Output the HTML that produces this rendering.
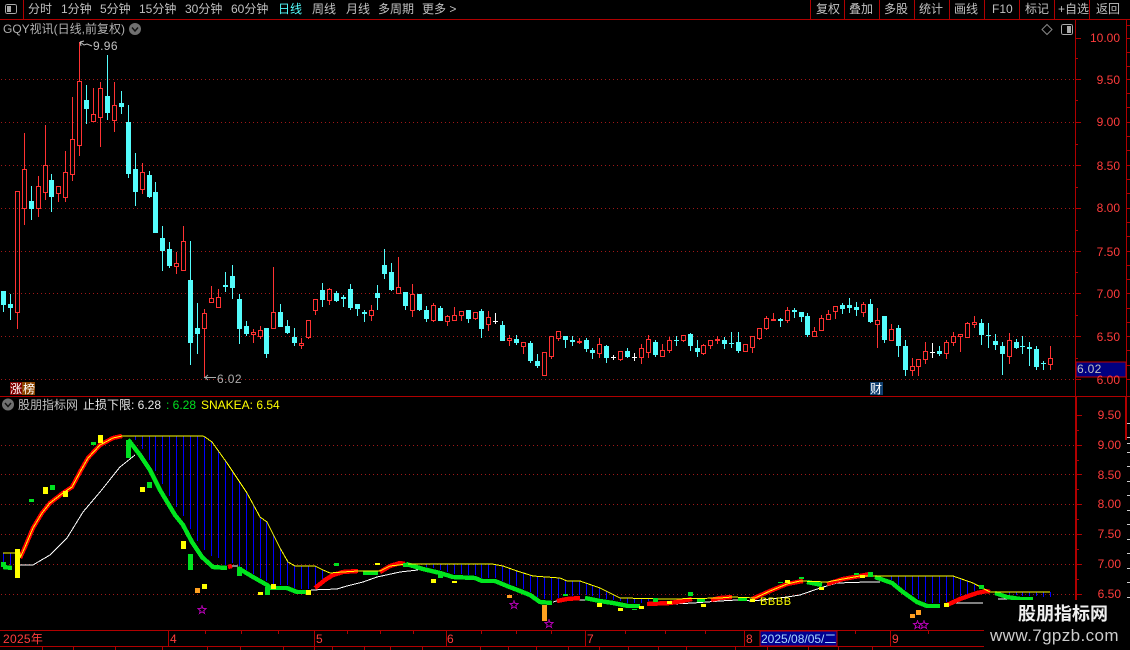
<!DOCTYPE html>
<html><head><meta charset="utf-8"><style>
html,body{margin:0;padding:0;background:#000;width:1130px;height:650px;overflow:hidden}
#r{position:relative;width:1130px;height:650px;background:#000;overflow:hidden;font:12px/14px "Liberation Sans","WenQuanYi Zen Hei","Noto Sans CJK SC",sans-serif;color:#c0c0c0}
#r span{position:absolute;white-space:nowrap}
svg{position:absolute;left:0;top:0}
.p{color:#ff3c3c;width:40px;text-align:right}
.a{color:#ff3c3c}
</style></head><body><div id="r">
<svg id="s" width="1130" height="650" shape-rendering="crispEdges">
<g fill="#b00000">
<rect x="0" y="19" width="1130" height="1"/><rect x="23" y="0" width="1" height="19"/>
<rect x="810" y="0" width="1" height="19"/><rect x="844" y="0" width="1" height="19"/><rect x="879" y="0" width="1" height="19"/><rect x="914" y="0" width="1" height="19"/><rect x="949" y="0" width="1" height="19"/><rect x="984" y="0" width="1" height="19"/><rect x="1019" y="0" width="1" height="19"/><rect x="1054" y="0" width="1" height="19"/><rect x="1089" y="0" width="1" height="19"/>
<rect x="1075" y="20" width="1" height="376"/><rect x="1126" y="20" width="1" height="376"/>
<rect x="0" y="396" width="1130" height="1"/>
<rect x="1075" y="396" width="2" height="254"/><rect x="1125" y="396" width="2" height="44"/>
<rect x="0" y="630" width="1075" height="1"/><rect x="0" y="646" width="1075" height="1"/>
<rect x="168" y="631" width="1" height="15"/><rect x="314" y="631" width="1" height="15"/><rect x="446" y="631" width="1" height="15"/><rect x="585" y="631" width="1" height="15"/><rect x="744" y="631" width="1" height="15"/><rect x="890" y="631" width="1" height="15"/>
<rect x="205" y="631" width="1" height="3"/><rect x="241" y="631" width="1" height="3"/><rect x="278" y="631" width="1" height="3"/><rect x="347" y="631" width="1" height="3"/><rect x="380" y="631" width="1" height="3"/><rect x="413" y="631" width="1" height="3"/><rect x="481" y="631" width="1" height="3"/><rect x="516" y="631" width="1" height="3"/><rect x="551" y="631" width="1" height="3"/><rect x="625" y="631" width="1" height="3"/><rect x="665" y="631" width="1" height="3"/><rect x="705" y="631" width="1" height="3"/><rect x="855" y="631" width="1" height="3"/><rect x="928" y="631" width="1" height="3"/>
<rect x="42" y="647" width="1" height="3"/><rect x="73" y="647" width="1" height="3"/><rect x="115" y="647" width="1" height="3"/><rect x="162" y="647" width="1" height="3"/><rect x="207" y="647" width="1" height="3"/><rect x="240" y="647" width="1" height="3"/><rect x="283" y="647" width="1" height="3"/><rect x="314" y="647" width="1" height="3"/><rect x="332" y="647" width="1" height="3"/><rect x="364" y="647" width="1" height="3"/><rect x="390" y="647" width="1" height="3"/><rect x="422" y="647" width="1" height="3"/><rect x="480" y="647" width="1" height="3"/><rect x="508" y="647" width="1" height="3"/><rect x="536" y="647" width="1" height="3"/><rect x="568" y="647" width="1" height="3"/><rect x="599" y="647" width="1" height="3"/><rect x="628" y="647" width="1" height="3"/><rect x="658" y="647" width="1" height="3"/><rect x="686" y="647" width="1" height="3"/><rect x="735" y="647" width="1" height="3"/><rect x="767" y="647" width="1" height="3"/><rect x="808" y="647" width="1" height="3"/><rect x="838" y="647" width="1" height="3"/><rect x="872" y="647" width="1" height="3"/>
</g>
<g stroke="#a01818" stroke-width="1" stroke-dasharray="1 3">
<line x1="1" y1="79.5" x2="1075" y2="79.5"/><line x1="1" y1="122.5" x2="1075" y2="122.5"/><line x1="1" y1="165.5" x2="1075" y2="165.5"/><line x1="1" y1="208.5" x2="1075" y2="208.5"/><line x1="1" y1="251.5" x2="1075" y2="251.5"/><line x1="1" y1="293.5" x2="1075" y2="293.5"/><line x1="1" y1="336.5" x2="1075" y2="336.5"/><line x1="1" y1="379.5" x2="1075" y2="379.5"/>
<line x1="1" y1="445.5" x2="1075" y2="445.5"/><line x1="1" y1="474.5" x2="1075" y2="474.5"/><line x1="1" y1="504.5" x2="1075" y2="504.5"/><line x1="1" y1="534.5" x2="1075" y2="534.5"/><line x1="1" y1="564.5" x2="1075" y2="564.5"/><line x1="1" y1="594.5" x2="1075" y2="594.5"/>
</g>
<g id="g"></g>
<g fill="#fff">
<rect x="204" y="377" width="12" height="1" fill="#aaa"/>
</g>
<g stroke="#c0c0c0" fill="none" shape-rendering="auto">
<path d="M92 46 L87 44 L84 45 L80 42 M80 42 L84 41 M80 42 L81 46" stroke-width="1"/>
<path d="M216 377.5 H205 M205 377.5 L208 375 M205 377.5 L208 380" stroke-width="1" stroke="#aaa"/>
<path d="M1047 24.5 L1052 29.5 L1047 34.5 L1042 29.5 Z" stroke="#888"/>
</g>
<rect x="1061.5" y="24.5" width="11" height="10" rx="2" fill="none" stroke="#aaa"/><rect x="1067" y="26" width="4" height="7" fill="#aaa"/>
<rect x="5.5" y="4.5" width="11" height="9" rx="2" fill="none" stroke="#aaa"/><rect x="7" y="6" width="4" height="6" fill="#aaa"/>
<g shape-rendering="auto">
<circle cx="135" cy="29" r="6" fill="#707070"/><path d="M132 27.5 L135 31 L138 27.5" fill="none" stroke="#111" stroke-width="1.4"/>
<circle cx="8" cy="404.5" r="6" fill="#707070"/><path d="M5 403 L8 406.5 L11 403" fill="none" stroke="#111" stroke-width="1.4"/>
</g>
<rect x="10" y="382" width="12" height="13" fill="#800000"/><rect x="22" y="382" width="13" height="13" fill="#8b4500"/>
<rect x="870" y="382" width="13" height="13" fill="#104070"/>
<rect x="1076" y="362" width="50" height="15" fill="#000080" stroke="#c00000"/>
<g fill="#b00000" id="t"></g>
<rect x="760" y="631" width="77" height="15" fill="#000090" stroke="#c00000"/>
<rect x="984" y="600" width="146" height="50" fill="#000"/>
</svg>
<span style="left:28px;top:2px">分时</span><span style="left:61px;top:2px">1分钟</span><span style="left:100px;top:2px">5分钟</span><span style="left:139px;top:2px">15分钟</span><span style="left:185px;top:2px">30分钟</span><span style="left:231px;top:2px">60分钟</span><span style="left:278px;top:2px;color:#54fcfc">日线</span><span style="left:312px;top:2px">周线</span><span style="left:346px;top:2px">月线</span><span style="left:378px;top:2px">多周期</span><span style="left:422px;top:2px">更多 &gt;</span>
<span style="left:816px;top:2px">复权</span><span style="left:849px;top:2px">叠加</span><span style="left:884px;top:2px">多股</span><span style="left:919px;top:2px">统计</span><span style="left:954px;top:2px">画线</span><span style="left:992px;top:2px">F10</span><span style="left:1025px;top:2px">标记</span><span style="left:1058px;top:2px">+自选</span><span style="left:1096px;top:2px">返回</span>
<span style="left:3px;top:22px;color:#b0b0b0">GQY视讯(日线,前复权)</span>
<span style="left:93px;top:39px;letter-spacing:.4px">9.96</span>
<span style="left:217px;top:372px;letter-spacing:.4px;color:#aaa">6.02</span>
<span class="p" style="left:1080px;top:31px">10.00</span><span class="p" style="left:1080px;top:73px">9.50</span><span class="p" style="left:1080px;top:115px">9.00</span><span class="p" style="left:1080px;top:159px">8.50</span><span class="p" style="left:1080px;top:201px">8.00</span><span class="p" style="left:1080px;top:245px">7.50</span><span class="p" style="left:1080px;top:287px">7.00</span><span class="p" style="left:1080px;top:330px">6.50</span><span class="p" style="left:1080px;top:373px">6.00</span>
<span style="left:1077px;top:362px;color:#c0c0c0;letter-spacing:.3px">6.02</span>
<span style="left:10px;top:382px;color:#fff;width:25px;letter-spacing:1px">涨榜</span>
<span style="left:870px;top:382px;color:#fff">财</span>
<span style="left:18px;top:398px">股朋指标网</span><span style="left:83px;top:398px;color:#e8e8e8">止损下限: 6.28</span><span style="left:166px;top:398px;color:#00e020">: 6.28</span><span style="left:201px;top:398px;color:#ffff00">SNAKEA: 6.54</span>
<span class="p" style="left:1081px;top:408px">9.50</span><span class="p" style="left:1081px;top:438px">9.00</span><span class="p" style="left:1081px;top:468px">8.50</span><span class="p" style="left:1081px;top:497px">8.00</span><span class="p" style="left:1081px;top:527px">7.50</span><span class="p" style="left:1081px;top:557px">7.00</span><span class="p" style="left:1081px;top:587px">6.50</span>
<span style="left:760px;top:595px;color:#ffff00;font-size:11px;letter-spacing:.6px">BBBB</span>
<span class="a" style="left:3px;top:632px;letter-spacing:.3px">2025年</span><span class="a" style="left:170px;top:632px">4</span><span class="a" style="left:316px;top:632px">5</span><span class="a" style="left:447px;top:632px">6</span><span class="a" style="left:587px;top:632px">7</span><span class="a" style="left:746px;top:632px">8</span><span class="a" style="left:892px;top:632px">9</span>
<span style="left:761px;top:632px;color:#a8d8ff">2025/08/05/二</span>
<span style="left:1018px;top:603px;font-size:18px;line-height:22px;font-weight:bold;color:#eee">股朋指标网</span>
<span style="left:990px;top:626px;font-size:17px;line-height:20px;color:#ccc;letter-spacing:.4px">www.7gpzb.com</span>
</div>
<script>
var D="291,291,305,312,c;294,304,308,320,c;191,191,313,329,r;133,169,209,225,r;186,201,209,220,c;176,186,209,217,r;125,165,193,200,r;174,180,197,212,c;186,186,194,202,r;151,172,198,202,r;97,139,175,181,r;42,81,146,156,r;85,100,109,124,c;88,114,122,122,r;82,88,118,147,r;55,96,113,120,c;82,105,121,132,r;91,103,107,114,c;105,122,174,178,c;153,169,192,206,c;163,172,190,194,r;171,175,197,198,c;182,192,233,233,c;226,238,251,271,c;242,249,266,268,c;252,263,267,274,r;226,241,271,271,r;241,280,343,365,c;303,328,334,354,c;309,313,329,378,r;286,298,303,303,r;289,297,308,308,r;272,285,287,292,c;265,276,288,299,c;294,299,329,344,c;321,326,334,336,c;329,332,335,343,r;326,330,337,339,r;328,328,354,358,c;267,312,329,329,r;304,312,327,327,c;320,326,333,334,c;328,337,343,346,c;338,343,346,349,r;320,320,338,339,r;299,299,311,315,r;283,290,300,307,c;288,289,301,305,r;291,293,301,302,c;295,297,299,307,c;284,289,308,310,c;304,304,309,316,c;310,312,314,322,c;305,310,316,321,r;285,293,298,310,c;249,265,274,279,c;263,272,290,291,c;257,287,294,294,r;292,292,306,310,c;284,294,311,317,r;294,294,310,311,c;306,310,319,322,c;303,305,321,322,r;306,308,321,321,c;315,316,322,326,r;307,315,321,321,r;311,311,316,321,r;310,310,319,323,c;312,312,319,320,r;309,311,329,338,c;311,317,325,331,r;313,321,322,324,w;321,325,341,341,c;335,338,341,346,r;335,339,343,345,c;342,342,347,354,r;341,343,361,363,c;354,361,366,368,c;352,352,376,376,r;336,336,357,359,r;331,331,339,341,r;336,336,340,348,c;336,340,342,346,c;338,341,343,344,r;338,340,349,352,c;348,350,353,359,c;338,344,354,358,r;345,346,358,363,c;355,357,358,360,w;351,351,360,361,r;348,351,357,358,c;353,357,358,361,w;344,348,358,364,r;335,339,353,358,r;340,342,355,357,c;344,350,357,357,r;337,340,351,353,r;336,340,341,346,c;335,335,341,342,r;333,334,346,351,c;340,348,352,357,c;344,345,354,355,r;340,340,346,349,r;336,339,341,344,r;337,340,344,349,c;332,343,344,348,c;332,342,351,353,c;344,344,352,352,r;336,336,348,353,r;328,328,339,340,r;316,318,329,330,r;313,319,321,321,r;318,319,321,327,c;307,310,321,323,r;308,310,312,318,c;312,312,317,322,c;313,316,335,337,c;327,331,337,337,r;315,318,331,331,r;310,314,320,320,r;306,306,312,319,r;303,305,309,314,c;298,305,308,313,c;302,307,310,316,c;302,304,313,317,r;299,304,322,323,c;308,320,325,348,r;316,316,340,343,c;324,329,341,341,r;325,328,346,357,c;340,346,370,376,c;358,366,371,376,r;359,359,367,376,r;342,351,360,364,r;343,352,353,358,w;346,351,354,356,c;340,342,354,359,r;332,336,343,346,r;334,334,337,352,r;322,323,338,338,r;316,322,325,328,r;319,323,335,345,c;323,335,336,348,c;334,341,345,350,c;342,346,354,375,c;333,340,357,364,r;339,342,348,349,c;336,346,347,354,c;342,347,349,366,c;346,349,367,370,c;361,363,364,370,c;346,358,365,370,r".split(";");
var s={r:"",c:"",w:""},rw="",X=[];
D.forEach(function(v,i){var a=v.split(","),x=Math.floor(3.4+6.936*i),h=+a[0],t=+a[1],b=+a[2],l=+a[3],k=a[4];X.push(x);
 if(b<=t)b=t+1;
 if(k=="r"){
  if(h<t)rw+="M"+x+" "+h+"h1V"+t+"h-1z";
  if(l>b)rw+="M"+x+" "+b+"h1V"+l+"h-1z";
  s.r+="M"+(x-2)+" "+t+"h5V"+b+"h-5z";
  if(b-t>2)s.r+="M"+(x-1)+" "+(t+1)+"h3V"+(b-1)+"h-3z";
 }else{
  s[k]+="M"+x+" "+h+"h1V"+l+"h-1z M"+(x-2)+" "+t+"h5V"+b+"h-5z";
 }
});
var segs=[
["g",[[3,567],[12,568]]],
["r",[[20,558],[25,547],[33,528],[42,513],[50,503],[63,493],[72,487],[80,472],[88,458],[100,445],[113,438],[122,436]]],
["g",[[128,440],[130,442],[140,455],[150,470],[160,490],[175,515],[183,525],[192,542],[202,557],[213,567],[227,568]]],
["r",[[228,567],[232,566]]],
["g",[[238,568],[253,577],[267,585],[270,588],[287,588],[297,592],[310,592]]],
["r",[[315,588],[325,580],[333,575],[343,572],[358,571]]],
["g",[[363,573],[378,573]]],
["r",[[380,572],[390,566],[400,563],[405,564]]],
["g",[[406,564],[413,566],[423,569],[440,573],[453,577],[475,578],[482,581],[495,581],[507,586],[520,591],[530,595],[540,602],[552,603]]],
["r",[[557,601],[567,599],[580,598]]],
["g",[[585,598],[600,601],[613,603],[628,606],[640,606]]],
["r",[[647,604],[670,603],[683,601],[692,599]]],
["g",[[697,600],[705,600]]],
["r",[[711,600],[720,598],[732,597]]],
["g",[[738,599],[747,599]]],
["r",[[752,599],[770,591],[787,584],[803,581]]],
["g",[[807,582],[822,585]]],
["r",[[827,584],[843,579],[860,576],[870,574]]],
["g",[[875,577],[892,583],[903,592],[917,602],[927,606],[940,606]]],
["r",[[947,605],[960,599],[977,593],[987,591],[990,592]]],
["g",[[995,593],[1007,597],[1020,599],[1033,599]]]
];
var up=[[3,553],[20,553],[20,558],[25,547],[33,528],[42,513],[50,503],[63,493],[72,487],[80,472],[88,458],[100,445],[113,438],[122,436],[203,436],[205,437],[212,442],[227,463],[247,493],[260,517],[267,522],[280,548],[288,562],[295,566],[315,566],[323,570],[330,573],[343,572],[358,571],[380,571],[390,566],[407,564],[492,564],[503,566],[517,571],[533,576],[560,578],[567,581],[580,581],[600,588],[620,598],[670,599],[720,598],[732,597],[755,598],[770,591],[787,584],[800,581],[827,582],[843,579],[860,576],[953,576],[973,583],[990,592],[1050,592]];
var wh=[[[20,565],[33,565],[38,562],[50,555],[67,538],[83,512],[100,492],[120,467],[135,455]],[[232,566],[238,566]],[[311,590],[337,589],[347,586],[363,582],[377,577],[400,572],[418,570]],[[553,602],[560,600]],[[577,600],[587,600]],[[647,605],[673,604],[693,603],[720,601],[737,600],[753,601],[787,597],[800,595],[820,588],[837,583],[867,582],[880,582]],[[950,603],[983,603]],[[998,599],[1007,599]]];
var all=[];segs.forEach(function(g){all=all.concat(g[1])});all.push([1051,600]);
function ip(A,x){for(var i=1;i<A.length;i++){if(x<=A[i][0]&&x>=A[i-1][0]){var d=A[i][0]-A[i-1][0];return d?A[i-1][1]+(A[i][1]-A[i-1][1])*(x-A[i-1][0])/d:A[i][1]}}return null}
var bl="";
X.forEach(function(x){var u=ip(up,x),m=ip(all,x);if(u==null||m==null)return;var e=m-((x>130&&x<225)?9:3);if(x<20)e=565;if(e-u>2)bl+="M"+x+" "+Math.round(u)+"h1V"+Math.round(e)+"h-1z";});
function P(p){return p.map(function(q){return q.join(",")}).join(" ")}
var o='<path fill="#ff3232" d="'+rw+'"/><path fill="#ff3232" fill-rule="evenodd" d="'+s.r+'"/><path fill="#54fcfc" d="'+s.c+'"/><path fill="#fff" d="'+s.w+'"/>';
o+='<path fill="#0000ff" d="'+bl+'"/>';
wh.forEach(function(w){o+='<polyline fill="none" stroke="#fff" stroke-width="1" points="'+P(w)+'"/>'});
segs.forEach(function(g){o+='<polyline fill="none" stroke="'+(g[0]=="r"?"#ff0000":"#00e61e")+'" stroke-width="4.4" points="'+P(g[1])+'"/>'});
o+='<polyline fill="none" stroke="#ffff00" stroke-width="1" points="'+P(up)+'"/>';
var Y="#ffff00",G="#00e020",O="#ffa020";
[[15,549,5,29,Y],[1,562,5,5,G],[29,499,5,3,G],[43,487,5,7,Y],[50,485,5,5,G],[63,491,5,6,Y],[91,442,5,3,G],[98,435,5,8,Y],[126,440,5,18,G],[140,487,5,5,Y],[147,482,5,6,G],[181,541,5,8,Y],[188,554,5,16,G],[195,588,5,5,O],[202,584,5,5,Y],[237,567,5,9,G],[258,592,5,3,Y],[265,587,5,8,G],[271,584,5,5,Y],[306,590,5,5,Y],[334,563,5,3,G],[375,563,5,2,Y],[403,563,5,4,G],[431,579,5,4,Y],[452,581,5,2,Y],[438,573,5,5,G],[507,595,5,3,O],[542,605,5,16,O],[563,594,5,2,G],[597,603,5,4,Y],[618,608,5,3,Y],[632,609,5,1,G],[639,606,5,3,Y],[653,598,5,4,G],[667,601,5,3,Y],[688,592,5,4,G],[701,604,5,3,Y],[750,599,5,3,Y],[778,582,5,1,G],[785,580,5,3,Y],[799,577,5,2,G],[819,587,5,3,Y],[854,573,5,2,G],[860,575,5,3,Y],[868,572,5,5,G],[910,614,5,4,O],[916,610,5,5,O],[944,603,5,4,Y],[979,585,5,4,G]].forEach(function(b){o+='<rect x="'+b[0]+'" y="'+b[1]+'" width="'+b[2]+'" height="'+b[3]+'" fill="'+b[4]+'"/>'});
[[202,610],[514,605],[549,624],[917.5,625],[924,625]].forEach(function(c){var p="";for(var i=0;i<10;i++){var r=i%2?1.8:4.2,a=-Math.PI/2+i*Math.PI/5;p+=(c[0]+r*Math.cos(a)).toFixed(1)+","+(c[1]+r*Math.sin(a)).toFixed(1)+" "}o+='<polygon points="'+p+'" fill="none" stroke="#b000b0" stroke-width="1"/>'});
document.getElementById("g").innerHTML=o;
var t="";
[38,79,122,165,208,251,293,336,379].forEach(function(y){t+='<rect x="1076" y="'+y+'" width="5" height="1"/>'});
[58,100,144,187,230,272,315,358].forEach(function(y){t+='<rect x="1076" y="'+y+'" width="2" height="1"/>'});
[415,445,474,504,534,564,594].forEach(function(y){t+='<rect x="1077" y="'+y+'" width="5" height="1"/>'});
[430,460,489,519,549,579].forEach(function(y){t+='<rect x="1077" y="'+y+'" width="2" height="1"/>'});
[25,38,52,66,79,93,107,122,136,150,165,179,193,208,222,236,251,265,279,293,308,322,336,350,365,379].forEach(function(y){t+='<rect x="1127" y="'+y+'" width="3" height="1"/>'});
[423,437,443,452,466,481,495,510,524,539,553,568,582,597].forEach(function(y){t+='<rect x="1127" y="'+y+'" width="3" height="1" fill="#ccc"/>'});
document.getElementById("t").innerHTML=t;
</script>
</body></html>
